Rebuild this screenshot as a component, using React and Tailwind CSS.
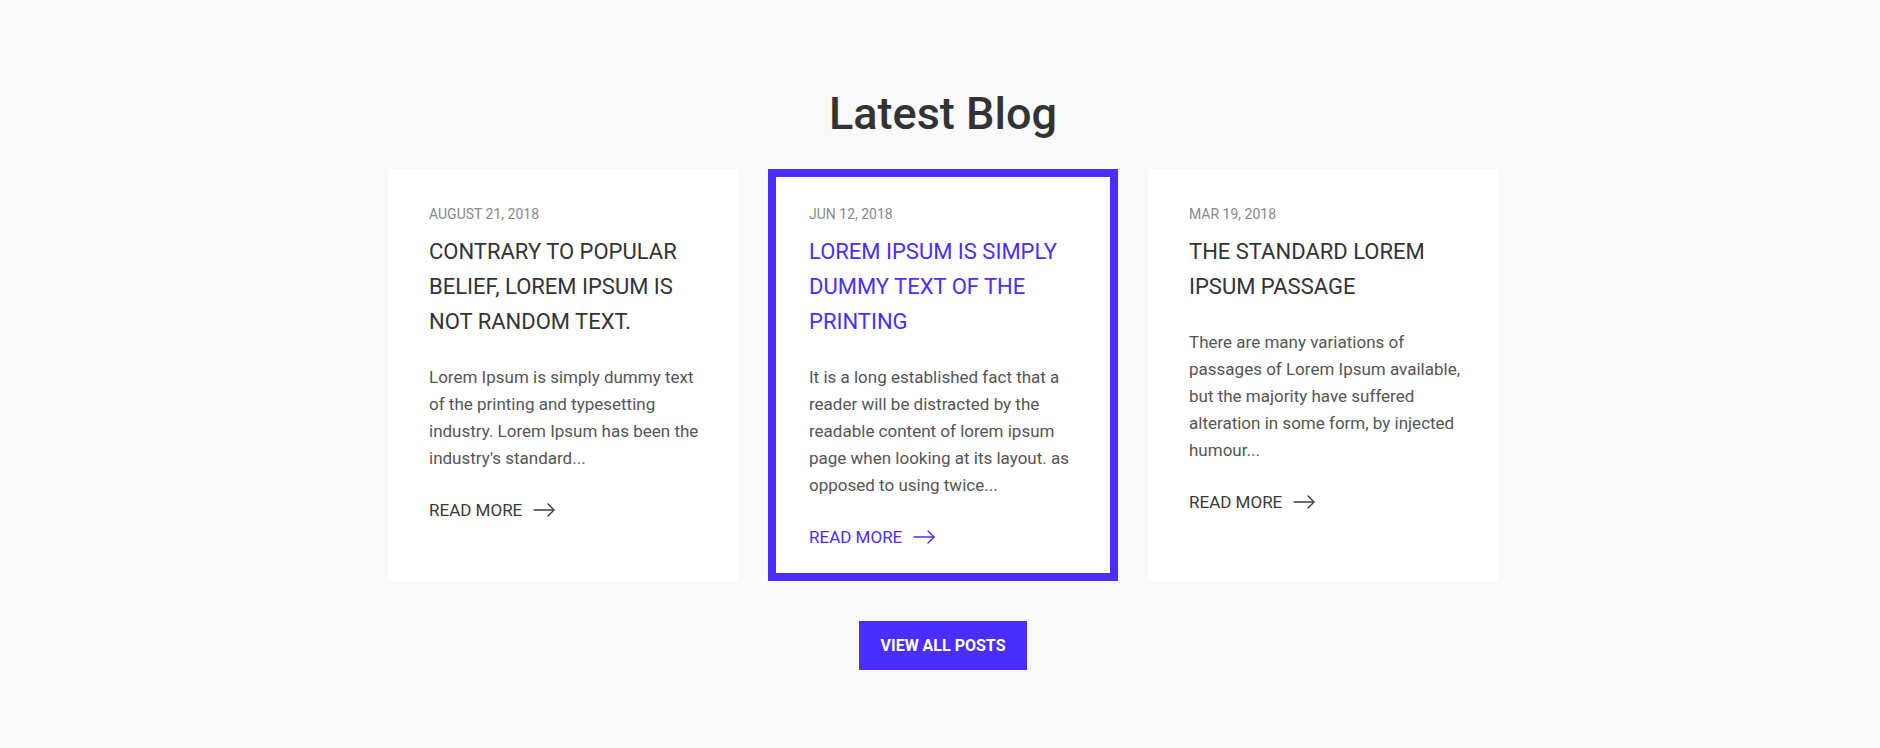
const posts = [
  {
    date: "AUGUST 21, 2018",
    title: "CONTRARY TO POPULAR BELIEF, LOREM IPSUM IS NOT RANDOM TEXT.",
    body: "Lorem Ipsum is simply dummy text of the printing and typesetting industry. Lorem Ipsum has been the industry's standard...",
  },
  {
    date: "JUN 12, 2018",
    title: "LOREM IPSUM IS SIMPLY DUMMY TEXT OF THE PRINTING",
    body: "It is a long established fact that a reader will be distracted by the readable content of lorem ipsum page when looking at its layout. as opposed to using twice...",
    active: true,
  },
  {
    date: "MAR 19, 2018",
    title: "THE STANDARD LOREM IPSUM PASSAGE",
    body: "There are many variations of passages of Lorem Ipsum available, but the majority have suffered alteration in some form, by injected humour...",
  },
];

function Arrow() {
  return (
    <svg width="22" height="14" viewBox="0 0 22 14" fill="none" stroke="currentColor" strokeWidth="1.4" strokeLinecap="round" strokeLinejoin="round">
      <path d="M1 7h20" />
      <path d="M15 1l6 6-6 6" />
    </svg>
  );
}

function PostCard({ post }) {
  return (
    <div
      className={
        post.active
          ? "w-[350px] bg-white border-8 border-[#4a2eff] pt-[27px] pl-[33px] pr-[26px] pb-[24px]"
          : "w-[350px] bg-white border-8 border-white pt-[27px] pl-[33px] pr-[26px] pb-[24px]"
      }
    >
      <div className="text-[14px] leading-[20px] text-[#888]">{post.date}</div>
      <h3
        className={
          post.active
            ? "mt-[10px] text-[22px] leading-[35px] text-[#4a2eff]"
            : "mt-[10px] text-[22px] leading-[35px] text-[#333]"
        }
      >
        {post.title}
      </h3>
      <p className="mt-[25px] text-[17px] leading-[27px] text-[#555]">{post.body}</p>
      <a
        href="#"
        className={
          post.active
            ? "mt-[26px] flex items-center gap-[11px] text-[17px] leading-[24px] text-[#4a2eff]"
            : "mt-[26px] flex items-center gap-[11px] text-[17px] leading-[24px] text-[#3a3a3a]"
        }
      >
        READ MORE
        <Arrow />
      </a>
    </div>
  );
}

export default function App() {
  return (
    <div
      className="min-h-[748px] bg-[#f9f9f9] pt-[91px] pl-[6px]"
      style={{ fontFamily: "Roboto, 'Liberation Sans', sans-serif" }}
    >
      <h2 className="text-center text-[45px] leading-none font-medium text-[#333]">Latest Blog</h2>

      <div className="mt-[33px] flex justify-center gap-[30px]">
        {posts.map((p) => (
          <PostCard key={p.date} post={p} />
        ))}
      </div>

      <div className="mt-[40px] flex justify-center">
        <button className="w-[168px] h-[49px] bg-[#4a2eff] text-white text-[16px] font-bold">
          VIEW ALL POSTS
        </button>
      </div>
    </div>
  );
}
